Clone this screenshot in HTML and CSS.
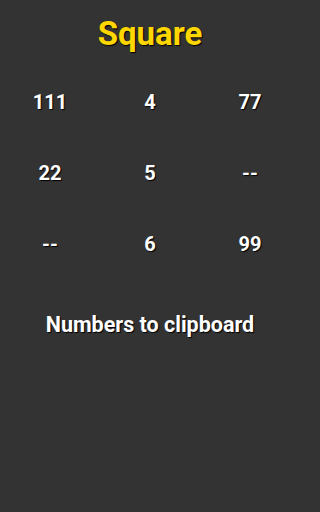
FILE: index.html
```html
<!DOCTYPE html>
<html>
<head>
<meta charset="utf-8">
<link rel="stylesheet" href="styles.css">
</head>
<body>
<div class="app">
  <h1 class="title">Square</h1>
  <div class="grid">
    <div class="cell">111</div>
    <div class="cell">4</div>
    <div class="cell">77</div>
    <div class="cell">22</div>
    <div class="cell">5</div>
    <div class="cell">--</div>
    <div class="cell">--</div>
    <div class="cell">6</div>
    <div class="cell">99</div>
  </div>
  <div class="action">Numbers to clipboard</div>
</div>
</body>
</html>
```
FILE: styles.css
```css
html, body {
  margin: 0;
  padding: 0;
  background: #333333;
  height: 100%;
}
.app {
  width: 300px;
  font-family: Roboto, "Liberation Sans", sans-serif;
  font-weight: 700;
  color: #ffffff;
  text-shadow: 1px 1px 1px #000000;
  padding-top: 14px;
}
.title {
  margin: 0;
  font-size: 33px;
  line-height: 40px;
  text-align: center;
  color: #ffd700;
}
.grid {
  margin-top: 12px;
  display: grid;
  grid-template-columns: repeat(3, 1fr);
  grid-auto-rows: 71px;
}
.cell {
  display: flex;
  align-items: center;
  justify-content: center;
  font-size: 20px;
}
.action {
  margin-top: 31px;
  font-size: 21.5px;
  line-height: 30px;
  text-align: center;
}
```
